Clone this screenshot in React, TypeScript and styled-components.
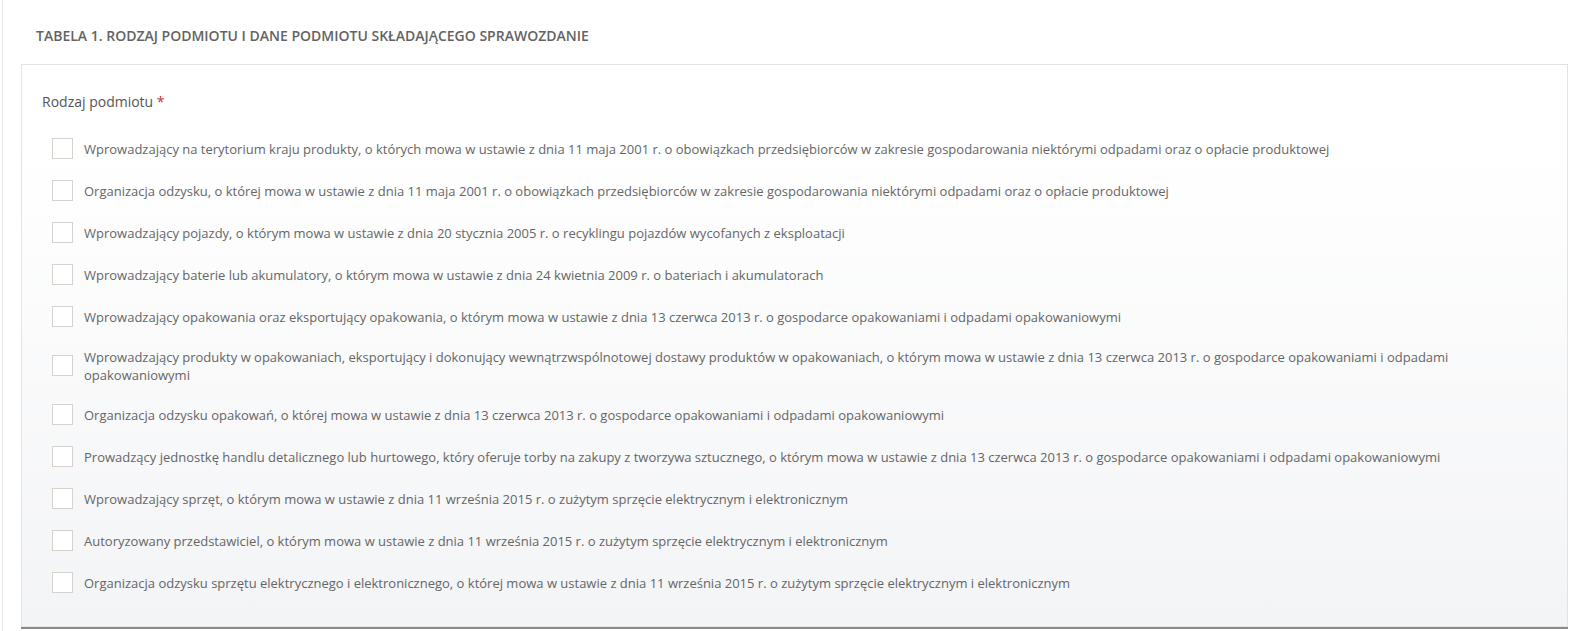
import React from "react";
import styled, { createGlobalStyle } from "styled-components";

const GlobalStyle = createGlobalStyle`
  html, body { margin: 0; padding: 0; background: #ffffff; }
  body { font-family: "Open Sans", "Noto Sans", sans-serif; }
  * { box-sizing: border-box; }
`;

const Page = styled.div`
  margin-left: 2px;
  border-left: 1px solid #e6e6e6;
  padding: 26px 3px 0 18px;
  min-height: 631px;
`;

const Title = styled.h2`
  margin: 0 0 18px 15px;
  font-size: 14px;
  line-height: 20px;
  font-weight: 600;
  color: #636363;
  text-transform: uppercase;
`;

const Panel = styled.section`
  border: 1px solid #e3e3e3;
  box-shadow: 0 2px 0 #8a8a8a;
  background: linear-gradient(to bottom, #ffffff 0%, #ffffff 15%, #f3f4f6 100%);
  padding: 27px 21px 13px 20px;
`;

const Label = styled.div`
  font-size: 14px;
  line-height: 20px;
  color: #555555;
  margin-bottom: 25px;
`;

const Required = styled.span`
  color: #c9302c;
`;

const List = styled.div`
  display: flex;
  flex-direction: column;
  padding-left: 10px;
`;

const Row = styled.label`
  display: flex;
  align-items: center;
  min-height: 23px;
  margin-bottom: 19px;
  gap: 11px;
  cursor: pointer;
`;

const Box = styled.span`
  flex: 0 0 21px;
  width: 21px;
  height: 21px;
  border: 1px solid #d6d2cd;
  background: #ffffff;
`;

const Text = styled.span`
  font-size: 13px;
  line-height: 18px;
  padding-top: 1px;
  color: #666666;
`;

const items = [
  "Wprowadzający na terytorium kraju produkty, o których mowa w ustawie z dnia 11 maja 2001 r. o obowiązkach przedsiębiorców w zakresie gospodarowania niektórymi odpadami oraz o opłacie produktowej",
  "Organizacja odzysku, o której mowa w ustawie z dnia 11 maja 2001 r. o obowiązkach przedsiębiorców w zakresie gospodarowania niektórymi odpadami oraz o opłacie produktowej",
  "Wprowadzający pojazdy, o którym mowa w ustawie z dnia 20 stycznia 2005 r. o recyklingu pojazdów wycofanych z eksploatacji",
  "Wprowadzający baterie lub akumulatory, o którym mowa w ustawie z dnia 24 kwietnia 2009 r. o bateriach i akumulatorach",
  "Wprowadzający opakowania oraz eksportujący opakowania, o którym mowa w ustawie z dnia 13 czerwca 2013 r. o gospodarce opakowaniami i odpadami opakowaniowymi",
  "Wprowadzający produkty w opakowaniach, eksportujący i dokonujący wewnątrzwspólnotowej dostawy produktów w opakowaniach, o którym mowa w ustawie z dnia 13 czerwca 2013 r. o gospodarce opakowaniami i odpadami opakowaniowymi",
  "Organizacja odzysku opakowań, o której mowa w ustawie z dnia 13 czerwca 2013 r. o gospodarce opakowaniami i odpadami opakowaniowymi",
  "Prowadzący jednostkę handlu detalicznego lub hurtowego, który oferuje torby na zakupy z tworzywa sztucznego, o którym mowa w ustawie z dnia 13 czerwca 2013 r. o gospodarce opakowaniami i odpadami opakowaniowymi",
  "Wprowadzający sprzęt, o którym mowa w ustawie z dnia 11 września 2015 r. o zużytym sprzęcie elektrycznym i elektronicznym",
  "Autoryzowany przedstawiciel, o którym mowa w ustawie z dnia 11 września 2015 r. o zużytym sprzęcie elektrycznym i elektronicznym",
  "Organizacja odzysku sprzętu elektrycznego i elektronicznego, o której mowa w ustawie z dnia 11 września 2015 r. o zużytym sprzęcie elektrycznym i elektronicznym",
];

export default function App() {
  return (
    <>
      <GlobalStyle />
      <Page>
        <Title>Tabela 1. Rodzaj podmiotu i dane podmiotu składającego sprawozdanie</Title>
        <Panel>
          <Label>
            Rodzaj podmiotu <Required>*</Required>
          </Label>
          <List>
            {items.map((t) => (
              <Row key={t}>
                <Box />
                <Text>{t}</Text>
              </Row>
            ))}
          </List>
        </Panel>
      </Page>
    </>
  );
}
